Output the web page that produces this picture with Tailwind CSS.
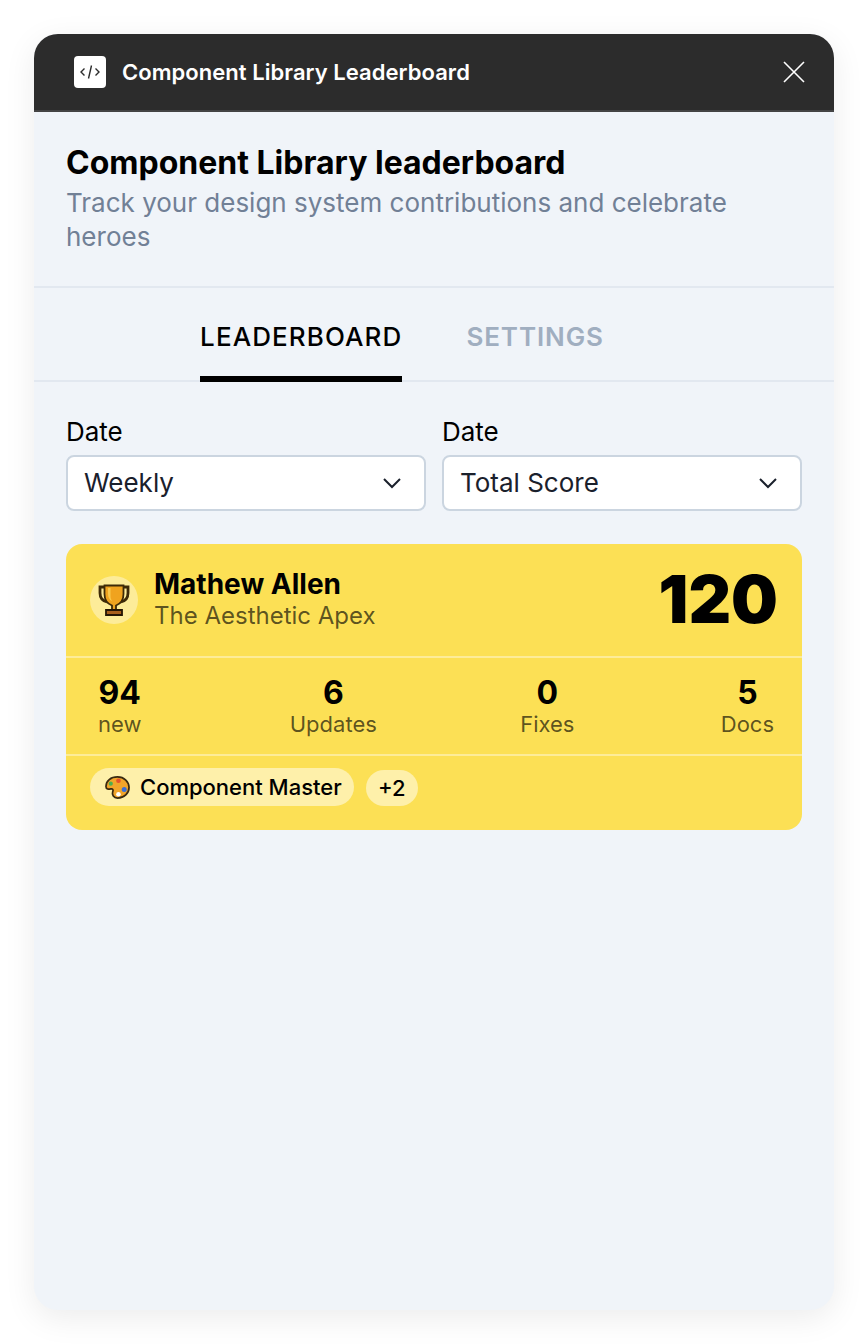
<!DOCTYPE html>
<html lang="en">
<head>
    <meta charset="UTF-8">
    <title>Component Library Leaderboard</title>
    <script src="https://cdn.jsdelivr.net/npm/@tailwindcss/browser@4"></script>
</head>
<body class="bg-white font-['Inter',sans-serif] min-h-screen p-[34px]">
    <div class="w-[800px] h-[1276px] rounded-[24px] overflow-hidden bg-[#f0f4f9] flex flex-col shadow-[0_8px_32px_rgba(0,0,0,0.08)]">
        <!-- title bar -->
        <div class="h-[78px] shrink-0 bg-[#2c2c2c] border-b-2 border-[#444444] flex items-center justify-between pl-10 pr-[28px]">
            <div class="flex items-center gap-4">
                <div class="w-8 h-8 rounded-[4px] bg-white flex items-center justify-center">
                    <svg class="w-[22px] h-[22px] text-[#2c2c2c]" viewBox="0 0 22 22" fill="none" stroke="currentColor" stroke-width="1.4">
                        <path d="M5.500 7.500 2 11l3.500 3.500M16.500 7.500 20 11l-3.500 3.500M12.500 4.500 9.500 17.500"></path>
                    </svg>
                </div>
                <span class="text-white text-[22px] font-semibold tracking-[0.05px]">Component Library Leaderboard</span>
            </div>
            <svg class="w-6 h-6 text-white" viewBox="0 0 24 24" fill="none" stroke="currentColor" stroke-width="1.6">
                <path d="M2 2l20 20M22 2 2 22"></path>
            </svg>
        </div>

        <!-- heading -->
        <div class="h-[176px] shrink-0 px-8 pt-[34px] border-b-2 border-[#e2e8f0]">
            <h1 class="text-[32px] leading-[34px] font-bold text-black">Component Library leaderboard</h1>
            <p class="mt-[6px] text-[26px] leading-[34px] text-[#718096]">Track your design system contributions and celebrate heroes</p>
        </div>

        <!-- tabs -->
        <div class="h-[94px] shrink-0 flex justify-center gap-[64px] pr-[64px] border-b-2 border-[#e2e8f0]">
            <div class="-mb-[2px] flex items-center border-b-[6px] border-black pt-[8px] text-[26px] font-medium tracking-[1.1px] text-black">LEADERBOARD</div>
            <div class="-mb-[2px] flex items-center border-b-[6px] border-transparent pt-[8px] text-[26px] font-semibold tracking-[0.9px] text-[#a0aec0]">SETTINGS</div>
        </div>

        <div class="px-8 pt-[33px]">
            <!-- filters -->
            <div class="grid grid-cols-2 gap-4">
                <div>
                    <div class="mt-[1px] text-[26px] leading-[32px] text-black mb-[7px]">Date</div>
                    <div class="h-[56px] bg-white border-2 border-[#cbd5e0] rounded-[8px] flex items-center justify-between pl-[16px] pr-[22px]">
                        <span class="-mt-[2px] text-[26px] text-[#1a202c]">Weekly</span>
                        <svg class="w-5 h-3 text-[#1a202c]" viewBox="0 0 20 12" fill="none" stroke="currentColor" stroke-width="2"><path d="M2 2l8 8 8-8"></path></svg>
                    </div>
                </div>
                <div>
                    <div class="mt-[1px] text-[26px] leading-[32px] text-black mb-[7px]">Date</div>
                    <div class="h-[56px] bg-white border-2 border-[#cbd5e0] rounded-[8px] flex items-center justify-between pl-[16px] pr-[22px]">
                        <span class="-mt-[2px] text-[26px] text-[#1a202c]">Total Score</span>
                        <svg class="w-5 h-3 text-[#1a202c]" viewBox="0 0 20 12" fill="none" stroke="currentColor" stroke-width="2"><path d="M2 2l8 8 8-8"></path></svg>
                    </div>
                </div>
            </div>

            <!-- top contributor card -->
            <div class="mt-[33px] bg-[#fce055] rounded-[16px] overflow-hidden">
                <div class="h-[114px] flex items-center justify-between px-6 border-b-2 border-white/40">
                    <div class="flex items-center gap-4">
                        <div class="w-12 h-12 rounded-full bg-white/40 flex items-center justify-center">
                            <svg class="w-8 h-8" viewBox="0 0 32 32">
                                <path d="M8 3H2v6c0 5 3 8 7 9M24 3h6v6c0 5-3 8-7 9" fill="none" stroke="#3d2a08" stroke-width="2.800"></path>
                                <path d="M6.500 1.500h19V10c0 6-3.500 10-7.500 11.500V26h-4v-4.500C10 20 6.500 16 6.500 10z" fill="#f0a31e" stroke="#3d2a08" stroke-width="1.800"></path>
                                <path d="M10 4h2.500v8c0 2 .5 3.500 1.500 5-2.500-1-4-4-4-7z" fill="#fbc84a"></path>
                                <path d="M8 26h16v5H8z" fill="#a85f1c" stroke="#241504" stroke-width="1.800"></path>
                            </svg>
                        </div>
                        <div>
                            <div class="text-[28px] leading-[30px] font-bold text-black">Mathew Allen</div>
                            <div class="mt-[2px] text-[24px] leading-[30px] text-black/65">The Aesthetic Apex</div>
                        </div>
                    </div>
                    <div class="-mt-[2px] text-[66px] leading-none font-black text-black">120</div>
                </div>
                <div class="h-[98px] flex items-center justify-between pl-8 pr-[28px] pt-[2px] border-b-2 border-white/40">
                    <div class="text-center"><div class="text-[32px] leading-[34px] font-bold text-black">94</div><div class="text-[22px] leading-[28px] text-black/65">new</div></div>
                    <div class="ml-[5px] text-center"><div class="text-[32px] leading-[34px] font-bold text-black">6</div><div class="text-[22px] leading-[28px] text-black/65">Updates</div></div>
                    <div class="mr-[3px] text-center"><div class="text-[32px] leading-[34px] font-bold text-black">0</div><div class="text-[22px] leading-[28px] text-black/65">Fixes</div></div>
                    <div class="text-center"><div class="text-[32px] leading-[34px] font-bold text-black">5</div><div class="text-[22px] leading-[28px] text-black/65">Docs</div></div>
                </div>
                <div class="h-[74px] flex items-start gap-3 px-6 pt-3">
                    <div class="h-[38px] pt-[1px] rounded-full bg-white/50 flex items-center gap-[10px] pl-[15px] pr-[12px] text-[22px] font-medium text-black">
                        <svg class="w-[25px] h-[25px]" viewBox="0 0 26 26">
                            <path d="M13 2C6 2 1 6 1 12c0 3 3 3 5 2.500 2-.5 3 1 2 3-1 3 1 6.500 5 6.500 7 0 12-5 12-11S20 2 13 2z" fill="#f2a52a" stroke="#3a2a10" stroke-width="1.800"></path>
                            <circle cx="14" cy="6" r="2.400" fill="#e5502e"></circle>
                            <circle cx="6" cy="9" r="2.200" fill="#4caf50"></circle>
                            <circle cx="20" cy="15" r="2.600" fill="#3b6fd4"></circle>
                            <circle cx="14" cy="20" r="2.400" fill="#ffffff"></circle>
                        </svg>
                        Component Master
                    </div>
                    <div class="mt-[2px] w-[52px] h-[36px] rounded-full bg-white/50 flex items-center justify-center text-[22px] font-medium text-black">+2</div>
                </div>
            </div>
        </div>
    </div>
</body>
</html>
